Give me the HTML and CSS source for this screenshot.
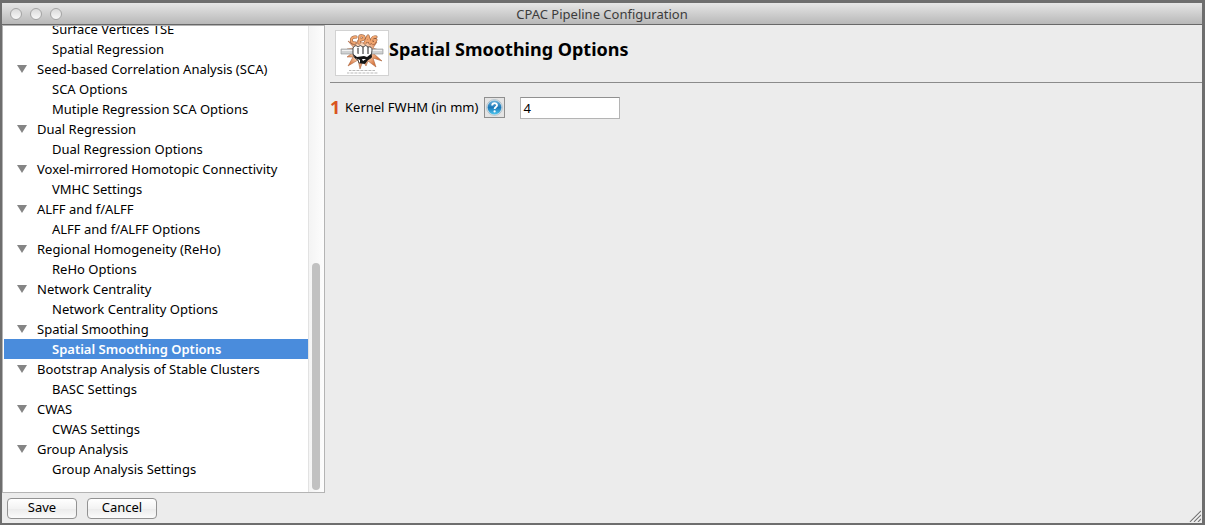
FILE: index.html
```html
<!DOCTYPE html>
<html lang="en">
<head>
<meta charset="utf-8">
<title>CPAC Pipeline Configuration</title>
<link rel="stylesheet" href="styles.css">
</head>
<body>
<div class="window">
  <header class="titlebar">
    <div class="lights">
      <button class="light" type="button" aria-label="Close"></button>
      <button class="light" type="button" aria-label="Minimize"></button>
      <button class="light" type="button" aria-label="Zoom"></button>
    </div>
    <span class="window-title">CPAC Pipeline Configuration</span>
  </header>
  <div class="workspace">
    <nav class="sidebar" aria-label="Settings">
      <ul class="tree">
        <li class="leaf">Surface Vertices TSE</li>
        <li class="leaf">Spatial Regression</li>
        <li class="branch">Seed-based Correlation Analysis (SCA)</li>
        <li class="leaf">SCA Options</li>
        <li class="leaf">Mutiple Regression SCA Options</li>
        <li class="branch">Dual Regression</li>
        <li class="leaf">Dual Regression Options</li>
        <li class="branch">Voxel-mirrored Homotopic Connectivity</li>
        <li class="leaf">VMHC Settings</li>
        <li class="branch">ALFF and f/ALFF</li>
        <li class="leaf">ALFF and f/ALFF Options</li>
        <li class="branch">Regional Homogeneity (ReHo)</li>
        <li class="leaf">ReHo Options</li>
        <li class="branch">Network Centrality</li>
        <li class="leaf">Network Centrality Options</li>
        <li class="branch">Spatial Smoothing</li>
        <li class="leaf selected" aria-current="page">Spatial Smoothing Options</li>
        <li class="branch">Bootstrap Analysis of Stable Clusters</li>
        <li class="leaf">BASC Settings</li>
        <li class="branch">CWAS</li>
        <li class="leaf">CWAS Settings</li>
        <li class="branch">Group Analysis</li>
        <li class="leaf">Group Analysis Settings</li>
      </ul>
      <div class="scrollbar"><div class="thumb"></div></div>
    </nav>
    <main class="panel">
      <div class="panel-head">
        <svg class="logo" viewBox="0 0 54 46" role="img" aria-label="CPAC">
          <defs>
            <radialGradient id="burst" cx="27" cy="22" r="17" gradientUnits="userSpaceOnUse">
              <stop offset=".4" stop-color="#fbd9bd"/>
              <stop offset="1" stop-color="#d9773f"/>
            </radialGradient>
          </defs>
          <rect x=".5" y=".5" width="53" height="45" fill="#fff" stroke="#d2d2d2"/>
          <path d="M13 11l7 4 3-5 5 3 6-3 1 4 7-2-4 6 6 2-6 3 9 8-9-3 3 9-8-6-2 5-3-5-3 8-2-9-10 6 5-9-6 0 5-4-5-4 7-1z" fill="url(#burst)" stroke="#a15a34" stroke-width=".5"/>
          <path d="M6 19h42v5H6z" fill="#cfd1d2" stroke="#8e9192" stroke-width=".6"/>
          <path d="M7 20.500h40" stroke="#f1f1f1"/>
          <g fill="none" stroke-linecap="round" stroke-linejoin="round">
            <path d="M21 7c-6-1-6 7-1 6M24 13l1-7c6-1 5 4 0 4M30 13l3-7 2 7m-4-2h3M41 7c-5-1-6 7-2 6l2-3h-2" stroke="#8a5638" stroke-width="3"/>
            <path d="M21 7c-6-1-6 7-1 6M24 13l1-7c6-1 5 4 0 4M30 13l3-7 2 7m-4-2h3M41 7c-5-1-6 7-2 6l2-3h-2" stroke="#f0a56f" stroke-width="2"/>
          </g>
          <path d="M18 18q2-4 5-1 2-3 5 0 3-3 5 0 4-1 4 3l-1 8-4 2-3 3h-5l-1-3q-5-2-5-7z" fill="#fff" stroke="#222" stroke-width=".8"/>
          <path d="M23 18v6m5-7v7m5-7v7" stroke="#333" stroke-width="1.1"/>
          <path d="M18 24l4 3 7-1 3 1 4-3 1 3-4 3-3 4-5-1v-3l-5-2z" fill="#151515"/>
          <path d="M20 23q6 2 9 1v2l-7 0zM27 29h4l-3 2z" fill="#fff"/>
          <path d="M14 40.500h26M12 43h31" stroke="#9b9b9b" stroke-width=".7" stroke-dasharray="2 .6 1 .4"/>
        </svg>
        <h1 class="panel-title">Spatial Smoothing Options</h1>
      </div>
      <form class="field">
        <span class="number">1</span>
        <label class="field-label" for="fwhm">Kernel FWHM (in mm)</label>
        <button class="help" type="button" aria-label="Help">
          <svg class="help-icon" viewBox="0 0 18 18" aria-hidden="true">
            <defs>
              <linearGradient id="blue" x1="0" y1="0" x2="0" y2="1">
                <stop offset="0" stop-color="#6db3dc"/>
                <stop offset=".5" stop-color="#1c78b8"/>
                <stop offset="1" stop-color="#4cc5ee"/>
              </linearGradient>
            </defs>
            <circle cx="9" cy="9" r="8.400" fill="#d9e4ea" stroke="#9fb3bf" stroke-width=".7"/>
            <circle cx="9" cy="9" r="7.300" fill="url(#blue)"/>
            <path d="M6.500 7c0-3.500 5.200-3.300 5.200-.4 0 1.900-2.600 1.900-2.600 4" fill="none" stroke="#fff" stroke-width="1.900"/>
            <circle cx="9.100" cy="13.200" r="1.200" fill="#fff"/>
          </svg>
        </button>
        <input class="text-input" id="fwhm" type="text" value="4">
      </form>
    </main>
  </div>
  <footer class="actions">
    <button class="push" type="button">Save</button>
    <button class="push" type="button">Cancel</button>
    <svg class="grip" viewBox="0 0 12 12" aria-hidden="true">
      <path d="M1 12L12 1M5 12l7-7M9 12l3-3" stroke="#777" stroke-width="1.1"/>
      <path d="M2.500 12L12 2.500M6.500 12L12 6.500" stroke="#fff" stroke-width=".6"/>
    </svg>
  </footer>
</div>
</body>
</html>
```
FILE: styles.css
```css
* { box-sizing: border-box; }

body {
  margin: 0;
  font: 13px/20px "Noto Sans", "Lucida Grande", sans-serif;
  color: #000;
}

button, input { font: inherit; color: inherit; }

.window {
  display: flex;
  flex-direction: column;
  height: 100vh;
  border: solid #6e6e6e;
  border-width: 3px 3px 2px 2px;
  background: #ececec;
}

.titlebar {
  display: grid;
  grid-template-columns: 1fr auto 1fr;
  align-items: center;
  height: 22px;
  flex: none;
  padding: 0 8px;
  border-bottom: 1px solid #686868;
  background: linear-gradient(#e6e6e6, #b8b8b8);
}

.lights { display: flex; gap: 8px; }

.light {
  width: 12px;
  height: 12px;
  padding: 0;
  border: 1px solid #a4a4a4;
  border-radius: 50%;
  background: linear-gradient(#dadada, #f8f8f8);
}

.window-title { color: #3c3c3c; }

.workspace {
  display: flex;
  flex: 1;
  min-height: 0;
}

.sidebar {
  display: flex;
  flex: none;
  width: 323px;
  border: 1px solid #b4b4b4;
  background: #fff;
}

.tree {
  display: flex;
  flex: 1;
  flex-direction: column;
  justify-content: flex-end;
  margin: 0;
  padding: 0 0 13px 1px;
  overflow: hidden;
  list-style: none;
  white-space: nowrap;
}

.tree li { flex: none; height: 20px; }
.leaf { padding-left: 48px; }

.branch {
  display: flex;
  align-items: center;
  gap: 10px;
  padding-left: 13px;
}

.branch::before {
  content: "";
  border: solid transparent;
  border-width: 8px 5px 0;
  border-top-color: #858585;
}

.selected {
  background: #4a8cdc;
  color: #fff;
  font-weight: 600;
}

.scrollbar {
  display: flex;
  flex-direction: column;
  justify-content: flex-end;
  width: 16px;
  padding: 0 4px 2px 3px;
  border-left: 1px solid #e2e2e2;
  background: linear-gradient(90deg, #f4f4f4, #fdfdfd);
}

.thumb {
  height: 49%;
  border-radius: 4px;
  background: #c1c1c1;
}

.panel { flex: 1; padding-left: 5px; }

.panel-head {
  display: flex;
  align-items: flex-start;
  height: 58px;
  padding: 5px 0 0 5px;
  border-bottom: 1px solid #8b8b8b;
}

.logo { width: 54px; height: 46px; }

.panel-title {
  margin: 6px 0 0;
  font-size: 18px;
  line-height: 26px;
}

.field {
  display: flex;
  align-items: flex-start;
  padding-top: 14px;
}

.number {
  width: 15px;
  color: #d9541e;
  font-size: 18px;
  font-weight: 700;
}

.help {
  display: flex;
  width: 21px;
  height: 21px;
  margin: 0 15px 0 6px;
  padding: 1px;
  border: 1px solid #8f8f8f;
  background: #e4e4e4;
}

.help-icon { width: 17px; height: 17px; }

.text-input {
  width: 100px;
  height: 22px;
  padding: 0 2px;
  border: 1px solid #b4b4b4;
  border-top-color: #909090;
  background: #fff;
}

.actions {
  display: flex;
  flex: none;
  gap: 10px;
  height: 30px;
  padding: 5px 1px 1px 5px;
}

.push {
  width: 70px;
  height: 21px;
  padding: 0 0 2px;
  border: 1px solid #929292;
  border-radius: 4px;
  background: linear-gradient(#fff, #f3f3f3 50%, #ebebeb 51%, #fbfbfb);
  line-height: 17px;
}

.grip {
  align-self: flex-end;
  width: 12px;
  height: 12px;
  margin-left: auto;
}
```
